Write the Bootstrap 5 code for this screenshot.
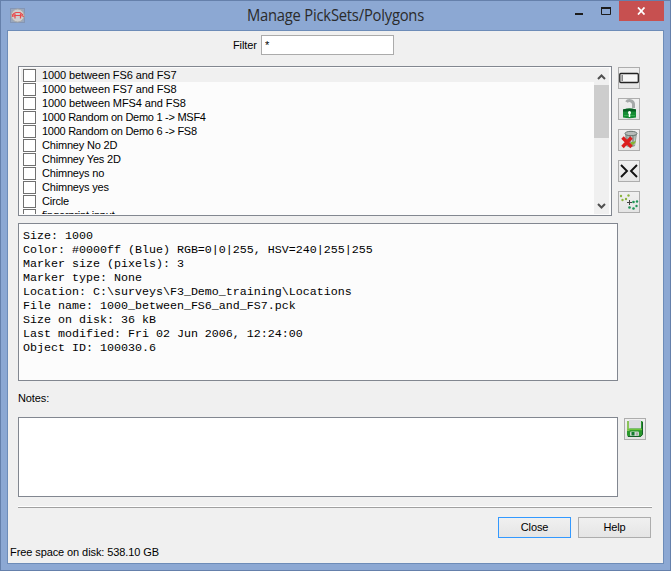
<!DOCTYPE html>
<html lang="en">
<head>
<meta charset="utf-8">
<title>Manage PickSets/Polygons</title>
<link href="https://cdn.jsdelivr.net/npm/bootstrap@5.3.0/dist/css/bootstrap.min.css" rel="stylesheet">
<style>
body{font:11px/14px "Liberation Sans",Arial,sans-serif;color:#000;overflow:hidden}
.window{width:671px;height:571px;background:#8ca8d3;border:1px solid #6580ab;padding:0 6px 6px}
.titlebar{height:29px}
.app-title{font:16px/29px "Open Sans","Noto Sans",sans-serif;color:#2b2b2b;letter-spacing:-.23px;transform:scaleX(.922)}
.app-icon{margin:6px 0 0 3px}
.close-win{width:45px;height:20px;background:#c75050;border-radius:0}
.client{height:534px;background:#f0f0f0;border:1px solid #6d8cb8;padding:0 10px}
.filter-row{height:35px;padding:4px 0 0 215px}
.filter-row label{width:28px;margin-top:3px;letter-spacing:-.1px}
.filter-input{width:133px;height:20px;padding:0 0 0 3px;border:1px solid #ababab;border-radius:0;font-size:11px;line-height:14px;color:#000}
.picks{width:594px;height:150px;border:1px solid #828790;background:#fcfcfc;padding:1px}
.pick-list{width:574px;padding-left:1px}
.pick{height:14px;line-height:15px;padding-left:1px;white-space:nowrap;letter-spacing:-.19px}
.pick:first-child{background:#f0f0f0}
.pick.sets{letter-spacing:-.1px}
.pick.random{letter-spacing:-.27px}
.pick .form-check-input{width:13px;height:13px;border:1px solid #707070;border-radius:0;margin:1px 6px 0 1px;flex:none;background:#fff}
.scroll{width:15px;background:#f0f0f0}
.thumb{height:53px;background:#cdcdcd}
.tool{width:22px;height:22px;padding:0;border:1px solid #adadad;border-radius:0;background:linear-gradient(#f0f0f0,#e5e5e5)}
.tools{gap:9px;padding:1px 0 0 6px}
.save{margin:1px 0 0 6px}
.tool svg,.scroll svg,.app-icon svg{display:block}
.info{width:600px;height:158px;margin:7px 0 0;border:1px solid #828790;background:#fcfcfc;padding:5px 4px;font:11.667px/14px "Liberation Mono","Courier New",monospace;color:#000;overflow:hidden}
.notes-label{height:36px;padding-top:10px;letter-spacing:-.1px}
.notes-box{width:600px;height:80px;border:1px solid #828790;border-radius:0;resize:none}
.rule{width:634px;height:2px;margin-top:9px;background:#a0a0a0;border-top:1px solid #fff}
.actions{gap:7px;width:633px;margin-top:9px}
.dlg-btn{width:73px;height:21px;padding:0;border:1px solid #adadad;border-radius:0;font-size:11px;line-height:19px;letter-spacing:-.1px;color:#000;background:linear-gradient(#f0f0f0,#e5e5e5)}
.dlg-btn.default{border-color:#3399ff}
.status{margin:7px 0 0 -8px;letter-spacing:-.09px}
</style>
</head>
<body>
<div class="window">
  <header class="titlebar d-flex position-relative">
    <div class="app-icon"><svg width="16" height="17" viewBox="0 0 16 17"><rect x=".5" y="1.5" width="14" height="14" fill="#9aa8bd" stroke="#8496b5"/><circle cx="7.7" cy="8.5" r="6.5" fill="#cfcfcf" stroke="#aaa"/><path d="M2 8.500l2-2 2-1h4l3 2.500M2 9.500l3-1h6l3 1M5 7v4.500M10.500 7v4.500" fill="none" stroke="#e94b4b" stroke-width="1.200"/></svg></div>
    <h1 class="app-title position-absolute start-0 end-0 text-center m-0">Manage PickSets/Polygons</h1>
    <div class="ms-auto d-flex position-relative">
      <svg width="62" height="29"><rect x="18" y="12" width="8" height="2" fill="#1c1c1c"/><path d="M44.500 6.500h9v7h-9z" fill="none" stroke="#1c1c1c"/><path d="M44 7h10" stroke="#1c1c1c" stroke-width="2"/></svg>
      <button class="btn close-win p-0 d-flex align-items-center justify-content-center border-0" aria-label="Close window"><svg width="9" height="8"><path d="M1 .5l6.500 7M7.500 .5L1 7.500" stroke="#fff" stroke-width="1.800"/></svg></button>
    </div>
  </header>
  <main class="client">
    <div class="filter-row d-flex align-items-start">
      <label for="filter">Filter</label>
      <input class="form-control filter-input" id="filter" value="*">
    </div>
    <div class="d-flex">
      <div class="picks d-flex">
        <div class="pick-list overflow-hidden" id="picks">
          <div class="pick sets d-flex"><input class="form-check-input" type="checkbox">1000 between FS6 and FS7</div>
          <div class="pick sets d-flex"><input class="form-check-input" type="checkbox">1000 between FS7 and FS8</div>
          <div class="pick sets d-flex"><input class="form-check-input" type="checkbox">1000 between MFS4 and FS8</div>
          <div class="pick random d-flex"><input class="form-check-input" type="checkbox">1000 Random on Demo 1 -&gt; MSF4</div>
          <div class="pick random d-flex"><input class="form-check-input" type="checkbox">1000 Random on Demo 6 -&gt; FS8</div>
          <div class="pick d-flex"><input class="form-check-input" type="checkbox">Chimney No 2D</div>
          <div class="pick d-flex"><input class="form-check-input" type="checkbox">Chimney Yes 2D</div>
          <div class="pick d-flex"><input class="form-check-input" type="checkbox">Chimneys no</div>
          <div class="pick d-flex"><input class="form-check-input" type="checkbox">Chimneys yes</div>
          <div class="pick d-flex"><input class="form-check-input" type="checkbox">Circle</div>
          <div class="pick d-flex"><input class="form-check-input" type="checkbox">fingerprint input</div>
        </div>
        <div class="scroll d-flex flex-column">
          <svg width="15" height="17"><path d="M4 11l3.500-3.500L11 11" fill="none" stroke="#505050" stroke-width="2"/></svg>
          <div class="thumb"></div>
          <svg class="mt-auto" width="15" height="17"><path d="M4 7L7.500 10.500L11 7" fill="none" stroke="#505050" stroke-width="2"/></svg>
        </div>
      </div>
      <div class="tools d-flex flex-column">
        <button class="btn tool" aria-label="Rename"><svg width="20" height="20"><rect x=".8" y="5.500" width="18.500" height="9" rx="1" fill="#f7f7f7" stroke="#222" stroke-width="1.300"/><path d="M3.200 7v6" stroke="#888" stroke-width="1.600"/></svg></button>
        <button class="btn tool" aria-label="Unlock"><svg width="20" height="20"><path d="M7.500 3C9 .8 14 1 14.500 5V9" fill="none" stroke="#a5a9a9" stroke-width="3"/><path d="M4 10.500q6.500-2 13 0v8q-6.500 1.500-13 0z" fill="#168c35"/><path d="M4 10.500q6.500-2 13 0v2H4z" fill="#075d22"/><path d="M5 16.500h11" stroke="#35ad4e"/><circle cx="10.500" cy="13.500" r="1.500" fill="#fff"/><path d="M10.500 14v4" stroke="#fff" stroke-width="1.500"/></svg></button>
        <button class="btn tool" aria-label="Remove"><svg width="20" height="20"><path d="M6 4l1 12q4 2.500 9 0l2-12z" fill="#939d98"/><path d="M9 6l1 10M12.500 6v10M16 6l-1 9" stroke="#c3ccc5"/><path d="M12 12q4 0 5-2l-.5 2q-1 3-4.500 3z" fill="#84b435"/><ellipse cx="12" cy="3.500" rx="6" ry="2.200" fill="#b8bcba" stroke="#687570"/><path d="M3.500 7.500l9 9.500M12.500 7.500l-9 9.500" stroke="#dc1e1e" stroke-width="3.400"/></svg></button>
        <button class="btn tool" aria-label="Merge"><svg width="20" height="20"><path d="M2 4l6 6-6 6M18 4l-6 6 6 6" fill="none" stroke="#111" stroke-width="1.900"/></svg></button>
        <button class="btn tool" aria-label="Pick points"><svg width="20" height="20"><g fill="#8bb43c"><circle cx="2" cy="4" r="1.200"/><circle cx="9.500" cy="3.500" r="1.200"/><circle cx="3.500" cy="8" r="1.200"/><circle cx="7" cy="7" r="1.200"/></g><g fill="#209457"><circle cx="14.500" cy="10" r="1.300"/><circle cx="18" cy="9.500" r="1.200"/><circle cx="10.500" cy="15.500" r="1.300"/><circle cx="14.500" cy="16.500" r="1.300"/><circle cx="17.500" cy="14" r="1.200"/></g><path d="M10.500 8v5M8 10.500h5" stroke="#444" stroke-width="1"/></svg></button>
      </div>
    </div>
    <pre class="info">Size: 1000
Color: #0000ff (Blue) RGB=0|0|255, HSV=240|255|255
Marker size (pixels): 3
Marker type: None
Location: C:\surveys\F3_Demo_training\Locations
File name: 1000_between_FS6_and_FS7.pck
Size on disk: 36 kB
Last modified: Fri 02 Jun 2006, 12:24:00
Object ID: 100030.6</pre>
    <div class="notes-label">Notes:</div>
    <div class="d-flex">
      <textarea class="form-control notes-box" aria-label="Notes"></textarea>
      <button class="btn tool save" aria-label="Save"><svg width="20" height="20"><path d="M2 2h15.500v14l-2 2H3l-1-2z" fill="#2a982c"/><path d="M2 2h2.500v10H2z" fill="#8bc45b"/><path d="M3 17.500h12.500l2-2V3" fill="none" stroke="#155e28"/><rect x="4" y="1" width="12" height="8.500" fill="#dcdce2"/><path d="M2.500 10.500h14.500" stroke="#6cc33c" stroke-width="1.400"/><rect x="5" y="12.500" width="9" height="4.500" rx="1" fill="#cbd6ce"/><rect x="6.500" y="13" width="3" height="3.500" fill="#147b30"/><path d="M12 13.500v3" stroke="#888"/></svg></button>
    </div>
    <div class="rule"></div>
    <div class="actions d-flex justify-content-end">
      <button class="btn dlg-btn default">Close</button>
      <button class="btn dlg-btn">Help</button>
    </div>
    <div class="status">Free space on disk: 538.10 GB</div>
  </main>
</div>
<script src="https://cdn.jsdelivr.net/npm/bootstrap@5.3.0/dist/js/bootstrap.bundle.min.js"></script>
</body>
</html>
